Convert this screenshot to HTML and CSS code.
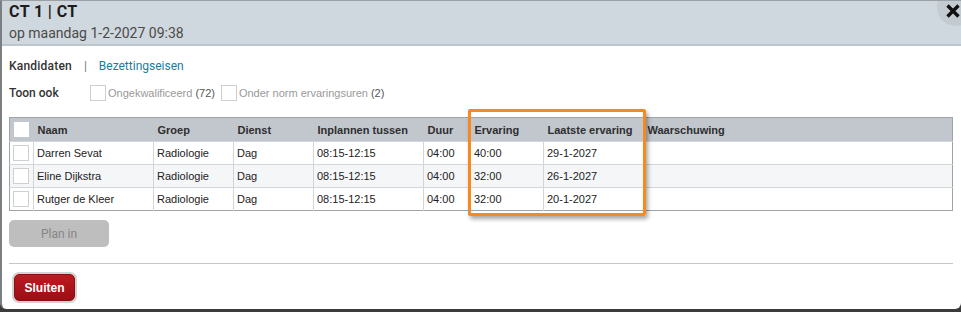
FILE: index.html
```html
<!DOCTYPE html>
<html lang="nl">
<head>
  <meta charset="UTF-8">
  <title>CT 1 | CT</title>
  <link rel="stylesheet" href="styles.css">
</head>
<body>
  <div class="dialog">
    <div class="dialog-header">
      <div class="title">CT 1 | CT</div>
      <div class="subtitle">op maandag 1-2-2027 09:38</div>
      <div class="close-btn">
        <svg width="16" height="16" viewBox="0 0 16 16">
          <path d="M2.5 2.5 L13.5 13.5 M13.5 2.5 L2.5 13.5" stroke="#111" stroke-width="3.4" stroke-linecap="butt"/>
        </svg>
      </div>
    </div>

    <div class="dialog-body">
      <div class="tabs">
        <span class="tab active">Kandidaten</span>
        <span class="tab-sep">|</span>
        <span class="tab link">Bezettingseisen</span>
      </div>

      <div class="filters">
        <span class="filter-label">Toon ook</span>
        <label class="check"><span class="box"></span>Ongekwalificeerd <b>(72)</b></label>
        <label class="check"><span class="box"></span>Onder norm ervaringsuren <b>(2)</b></label>
      </div>

      <div class="table-wrap">
        <table class="grid">
          <colgroup>
            <col class="col-chk">
            <col class="col-naam">
            <col class="col-groep">
            <col class="col-dienst">
            <col class="col-tussen">
            <col class="col-duur">
            <col class="col-erv">
            <col class="col-laatste">
            <col>
          </colgroup>
          <thead>
            <tr>
              <th class="chk"><span class="box head"></span></th>
              <th>Naam</th>
              <th>Groep</th>
              <th>Dienst</th>
              <th>Inplannen tussen</th>
              <th>Duur</th>
              <th>Ervaring</th>
              <th>Laatste ervaring</th>
              <th>Waarschuwing</th>
            </tr>
          </thead>
          <tbody>
            <tr>
              <td class="chk"><span class="box"></span></td>
              <td>Darren Sevat</td>
              <td>Radiologie</td>
              <td>Dag</td>
              <td>08:15-12:15</td>
              <td>04:00</td>
              <td>40:00</td>
              <td>29-1-2027</td>
              <td></td>
            </tr>
            <tr class="alt">
              <td class="chk"><span class="box"></span></td>
              <td>Eline Dijkstra</td>
              <td>Radiologie</td>
              <td>Dag</td>
              <td>08:15-12:15</td>
              <td>04:00</td>
              <td>32:00</td>
              <td>26-1-2027</td>
              <td></td>
            </tr>
            <tr>
              <td class="chk"><span class="box"></span></td>
              <td>Rutger de Kleer</td>
              <td>Radiologie</td>
              <td>Dag</td>
              <td>08:15-12:15</td>
              <td>04:00</td>
              <td>32:00</td>
              <td>20-1-2027</td>
              <td></td>
            </tr>
          </tbody>
        </table>
        <div class="highlight"></div>
      </div>

      <button class="btn-plan" disabled>Plan in</button>

      <div class="divider"></div>

      <button class="btn-close">Sluiten</button>
    </div>
  </div>
</body>
</html>
```

FILE: styles.css
```css
body {
  margin: 0;
  background: #3b3b3b;
  font-family: Roboto, 'Liberation Sans', sans-serif;
  overflow: hidden;
}
.dialog {
  position: relative;
  height: 308px;
  background: #fff;
  border-top: 1px solid #9aa0a5;
  border-left: 2px solid #7c7f82;
  border-radius: 0 0 6px 6px;
  overflow: hidden;
}
.dialog-header {
  position: relative;
  height: 42px;
  padding: 1px 7px 0;
  background: #cfd8de;
  border-bottom: 2px solid #bec6cc;
}
.title {
  font-size: 16px;
  font-weight: bold;
  line-height: 20px;
  color: #1c1c1c;
  letter-spacing: 0.4px;
}
.subtitle {
  font-size: 14px;
  line-height: 22px;
  color: #4a4a4a;
}
.close-btn {
  position: absolute;
  left: 935px;
  top: -12px;
  width: 37px;
  height: 37px;
  border-radius: 50%;
  background: #c3cbd1;
}
.close-btn svg {
  position: absolute;
  left: 8px;
  top: 14px;
}
.dialog-body {
  padding: 0 8px 0 7px;
}
.tabs {
  margin-top: 12px;
  font-size: 12px;
  line-height: 16px;
}
.tab.active {
  color: #333;
  font-weight: 500;
  letter-spacing: 0.2px;
}
.tab-sep {
  color: #777;
  margin: 0 9px 0 9px;
}
.tab.link {
  color: #1b7c98;
}
.filters {
  display: flex;
  align-items: center;
  margin-top: 11px;
  height: 16px;
}
.filter-label {
  font-size: 12px;
  font-weight: 500;
  color: #333;
  width: 81px;
}
.check {
  display: flex;
  align-items: center;
  font-family: 'Liberation Sans', Arial, sans-serif;
  font-size: 11px;
  color: #999;
  margin-right: 6px;
}
.check b {
  font-weight: normal;
  color: #555;
  margin-left: 3px;
}
.box {
  display: inline-block;
  box-sizing: border-box;
  width: 16px;
  height: 16px;
  background: #fff;
  border: 1px solid #cfcfcf;
}
.check .box {
  margin-right: 2px;
}
.table-wrap {
  position: relative;
  margin-top: 16px;
}
.grid {
  width: 944px;
  border-collapse: collapse;
  border: 1px solid #9ea3a8;
  font-family: 'Liberation Sans', Arial, sans-serif;
  font-size: 11px;
  color: #222;
  table-layout: fixed;
}
.grid th {
  height: 23px;
  padding: 0 4px;
  background: #c2c7ce;
  text-align: left;
  font-weight: bold;
  color: #2e2e2e;
  white-space: nowrap;
}
.grid td {
  height: 22px;
  padding: 0 3px;
  border-top: 1px solid #d3d6d9;
  border-left: 1px solid #d3d6d9;
}
.grid td:first-child {
  border-left: none;
}
.grid tr.alt td {
  background: #f5f6f8;
}
.grid .chk {
  padding: 0 0 0 3px;
}
.grid th.chk {
  padding-left: 4px;
}
.box.head {
  width: 15px;
  height: 15px;
  border: none;
  vertical-align: middle;
}
.grid td .box {
  vertical-align: middle;
}
.col-chk { width: 24px; }
.col-naam { width: 120px; }
.col-groep { width: 80px; }
.col-dienst { width: 80px; }
.col-tussen { width: 110px; }
.col-duur { width: 47px; }
.col-erv { width: 73px; }
.col-laatste { width: 100px; }
.highlight {
  position: absolute;
  left: 459px;
  top: -8px;
  width: 172px;
  height: 101px;
  border: 3px solid #f7891e;
  border-radius: 2px;
  box-shadow: 2px 3px 4px rgba(0, 0, 0, 0.35);
}
.btn-plan {
  display: block;
  margin-top: 9px;
  width: 100px;
  height: 27px;
  border: none;
  border-radius: 5px;
  background: #bebebe;
  color: #858585;
  font-family: Roboto, sans-serif;
  font-size: 12px;
  padding: 0;
}
.divider {
  margin-top: 16px;
  border-top: 1px solid #c3c7cb;
}
.btn-close {
  display: block;
  margin: 10px 0 0 5px;
  width: 61px;
  height: 27px;
  padding: 0;
  border: 1px solid #8c0d12;
  border-radius: 5px;
  background: linear-gradient(#bc1a20, #9a0f14);
  box-shadow: 0 0 0 2px #d2d2d2;
  color: #fff;
  font-family: 'Liberation Sans', Arial, sans-serif;
  font-weight: bold;
  font-size: 12px;
}
```
